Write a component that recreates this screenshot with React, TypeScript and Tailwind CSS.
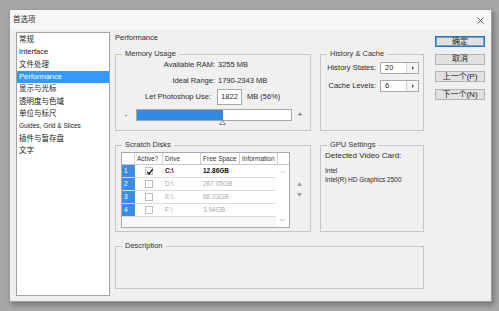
import React from "react";

const font = "font-['Liberation_Sans','Noto_Sans_CJK_SC',sans-serif]";

const navItems = [
  "常规",
  "Interface",
  "文件处理",
  "Performance",
  "显示与光标",
  "透明度与色域",
  "单位与标尺",
  "Guides, Grid & Slices",
  "插件与暂存盘",
  "文字",
];

const disks = [
  { n: "1", drive: "C:\\", free: "12.86GB", on: true },
  { n: "2", drive: "D:\\", free: "267.05GB", on: false },
  { n: "3", drive: "E:\\", free: "68.03GB", on: false },
  { n: "4", drive: "F:\\", free: "3.94GB", on: false },
];

function Group({
  title,
  className,
  children,
}: {
  title: string;
  className: string;
  children?: React.ReactNode;
}) {
  return (
    <fieldset className={`border border-[#c6c6c6] ${className}`}>
      <legend className="ml-[6px] whitespace-nowrap px-[3px] text-[7.5px] leading-[12px] text-[#333]">
        {title}
      </legend>
      {children}
    </fieldset>
  );
}

function Spin({ value }: { value: string }) {
  return (
    <div className="flex h-[12px] w-[39px] border border-[#a8a8a8] bg-white">
      <div className="flex-1 pl-[4px] text-[7.5px] leading-[10px]">{value}</div>
      <div className="flex w-[12px] items-center justify-center border-l border-[#d0d0d0] bg-[#f4f4f4]">
        <div className="h-0 w-0 border-y-[2px] border-l-[2px] border-y-transparent border-l-[#555]" />
      </div>
    </div>
  );
}

function Button({ label, primary }: { label: string; primary?: boolean }) {
  return (
    <div
      className={`flex h-[11px] w-[50px] items-center justify-center whitespace-nowrap bg-[#e1e1e1] text-[8px] leading-[10px] text-[#222] ${
        primary ? "border border-[#2f73b7] shadow-[inset_0_0_0_1px_#6aa3d8]" : "border border-[#b3b3b3]"
      }`}
    >
      {label}
    </div>
  );
}

export default function App() {
  return (
    <div className={`h-[311px] w-[499px] overflow-hidden bg-[#a7a7a7] pl-[9px] pt-[9px] ${font} text-[#2a2a2a]`}>
      <div className="flex h-[293px] w-[483px] flex-col border border-[#9c9c9c] bg-[#f0f0f0] shadow-[2px_3px_5px_rgba(0,0,0,0.3)]">
        {/* title bar */}
        <div className="flex h-[20px] items-center justify-between bg-[#f6f6f6] pl-[3px] pr-[7px]">
          <span className="text-[7.5px] leading-[10px]">首选项</span>
          <svg viewBox="0 0 8 8" className="h-[7px] w-[7px]">
            <path d="M0.5 0.5 L7.5 7.5 M7.5 0.5 L0.5 7.5" stroke="#333" strokeWidth="0.9" />
          </svg>
        </div>

        <div className="flex pl-[6px] pt-[2px]">
          {/* category list */}
          <div className="h-[264px] w-[94px] border border-[#a3a3a3] bg-white pt-[1px]">
            {navItems.map((item) => (
              <div
                key={item}
                className={`h-[12.33px] whitespace-nowrap pl-[2px] leading-[12.33px] ${
                  item === "Performance" ? "bg-[#3399ff] text-white" : "text-[#222]"
                } ${item === "Guides, Grid & Slices" ? "text-[6.5px]" : "text-[7.5px]"}`}
              >
                {item}
              </div>
            ))}
          </div>

          {/* main panel */}
          <div className="ml-[5px] flex w-[309px] flex-col">
            <div className="h-[12px] text-[7.5px] leading-[12px]">Performance</div>

            <div className="mt-[4px] flex gap-[9px]">
              <Group title="Memory Usage" className="h-[83px] w-[196px]">
                <div className="flex h-[10px] items-center whitespace-nowrap text-[7.5px]">
                  <span className="w-[99px] text-right">Available RAM:</span>
                  <span className="ml-[3px]">3255 MB</span>
                </div>
                <div className="mt-[6px] flex h-[10px] items-center whitespace-nowrap text-[7.5px]">
                  <span className="w-[99px] text-right">Ideal Range:</span>
                  <span className="ml-[3px]">1790-2343 MB</span>
                </div>
                <div className="mt-[3px] flex h-[16px] items-center whitespace-nowrap text-[7.5px]">
                  <span className="w-[95px] text-right">Let Photoshop Use:</span>
                  <div className="ml-[6px] h-[16px] w-[25px] border border-[#a8a8a8] bg-white text-center leading-[14px]">
                    1822
                  </div>
                  <span className="ml-[5px]">MB (56%)</span>
                </div>
                <div className="mt-[4px] flex h-[12px] items-center text-[7.5px]">
                  <span className="w-[20px] text-center">-</span>
                  <div className="relative h-[12px] w-[156px] border border-[#a8a8a8] bg-white">
                    <div className="h-full w-[86px] bg-[#2f8ae6]" />
                    <svg viewBox="0 0 8 6" className="absolute left-[82px] top-full h-[5px] w-[7px]">
                      <path d="M4 0.6 L7.4 5.4 L0.6 5.4 Z" fill="#fff" stroke="#666" strokeWidth="0.9" />
                    </svg>
                  </div>
                  <span className="w-[16px] text-center">+</span>
                </div>
              </Group>

              <Group title="History & Cache" className="h-[83px] w-[104px]">
                <div className="mt-[2px] flex h-[12px] items-center whitespace-nowrap text-[7.5px]">
                  <span className="w-[55px] text-right">History States:</span>
                  <div className="ml-[4px]">
                    <Spin value="20" />
                  </div>
                </div>
                <div className="mt-[6px] flex h-[12px] items-center whitespace-nowrap text-[7.5px]">
                  <span className="w-[55px] text-right">Cache Levels:</span>
                  <div className="ml-[4px]">
                    <Spin value="6" />
                  </div>
                </div>
              </Group>
            </div>

            <div className="mt-[8px] flex gap-[9px]">
              <Group title="Scratch Disks" className="h-[93px] w-[196px]">
                <div className="flex items-center">
                  <div className="ml-[5px] mt-[1px] h-[76px] w-[169px] border border-[#a8a8a8] bg-[#f7f7f7]">
                    <div className="flex h-[12px] whitespace-nowrap border-b border-[#c8c8c8] bg-white text-[6.5px] leading-[11px] text-[#333]">
                      <div className="w-[13px] border-r border-[#d0d0d0]" />
                      <div className="w-[28px] overflow-hidden border-r border-[#d0d0d0] pl-[2px]">Active?</div>
                      <div className="w-[38px] overflow-hidden border-r border-[#d0d0d0] pl-[2px]">Drive</div>
                      <div className="w-[39px] overflow-hidden border-r border-[#d0d0d0] pl-[2px]">Free Space</div>
                      <div className="w-[38px] overflow-hidden border-r border-[#d0d0d0] pl-[2px]">Information</div>
                      <div className="flex-1" />
                    </div>
                    <div className="flex">
                      <div className="w-[154px]">
                        {disks.map((d) => (
                          <div
                            key={d.n}
                            className={`flex h-[13px] whitespace-nowrap border-b border-[#dcdcdc] bg-white text-[6.5px] leading-[12px] ${
                              d.on ? "text-[#111]" : "text-[#a8a8a8]"
                            }`}
                          >
                            <div className="w-[13px] bg-[#3b8fe3] pl-[2px] text-white">{d.n}</div>
                            <div className="flex w-[28px] items-center justify-center">
                              <div className="relative h-[8px] w-[8px] border border-[#bdbdbd] bg-white">
                                {d.on && (
                                  <svg viewBox="0 0 8 8" className="absolute left-0 top-0 h-[8px] w-[8px]">
                                    <path d="M1.2 4 L3 6 L6.8 1.2" fill="none" stroke="#111" strokeWidth="1.3" />
                                  </svg>
                                )}
                              </div>
                            </div>
                            <div className={`w-[38px] pl-[2px] ${d.on ? "font-bold" : ""}`}>{d.drive}</div>
                            <div className={`w-[39px] pl-[2px] ${d.on ? "font-bold" : ""}`}>{d.free}</div>
                            <div className="w-[36px]" />
                          </div>
                        ))}
                      </div>
                      <div className="flex h-[62px] flex-1 flex-col items-center justify-between bg-white py-[2px] text-[6px] leading-[6px] text-[#aaa]">
                        <span>︿</span>
                        <span>﹀</span>
                      </div>
                    </div>
                  </div>
                  <div className="ml-[6px] flex flex-col gap-[3px] text-[7px] leading-[8px] text-[#9a9a9a]">
                    <span>▲</span>
                    <span>▼</span>
                  </div>
                </div>
              </Group>

              <Group title="GPU Settings" className="h-[93px] w-[104px]">
                <div className="whitespace-nowrap pl-[4px]">
                  <div className="h-[10px] text-[8px] leading-[10px]">Detected Video Card:</div>
                  <div className="mt-[6px] text-[6.5px] leading-[8.5px]">
                    <div>Intel</div>
                    <div>Intel(R) HD Graphics 2500</div>
                  </div>
                </div>
              </Group>
            </div>

            <Group title="Description" className="mt-[8px] h-[49px] w-[309px]" />
          </div>

          {/* buttons */}
          <div className="ml-[11px] mt-[4px] flex flex-col gap-[6.7px]">
            <Button label="确定" primary />
            <Button label="取消" />
            <Button label="上一个(P)" />
            <Button label="下一个(N)" />
          </div>
        </div>
      </div>
    </div>
  );
}
